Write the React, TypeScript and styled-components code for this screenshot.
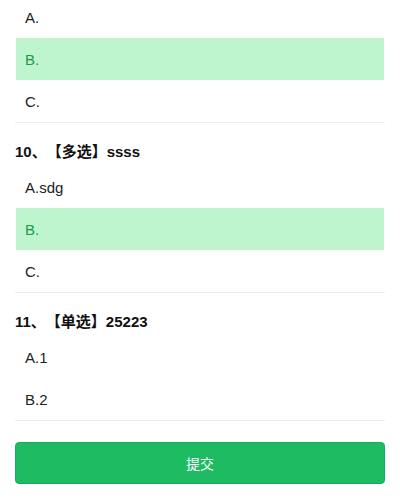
import React from "react";
import styled, { createGlobalStyle } from "styled-components";

const GlobalStyle = createGlobalStyle`
  html, body {
    margin: 0;
    padding: 0;
    background: #ffffff;
    font-family: "Liberation Sans", Arial, "Noto Sans CJK SC", sans-serif;
    overflow: hidden;
  }
`;

const Page = styled.div`
  width: 400px;
  height: 500px;
  overflow: hidden;
`;

const Content = styled.div`
  display: flex;
  flex-direction: column;
  padding: 0 15px 17px;
  margin-top: -4px;
`;

const Question = styled.section`
  display: flex;
  flex-direction: column;
  border-bottom: 1px solid #eeeeee;
`;

const Title = styled.div`
  padding-top: 18px;
  margin-bottom: 3px;
  font-size: 15px;
  line-height: 22px;
  font-weight: bold;
  color: #111111;
  text-spacing-trim: space-all;
`;

const Option = styled.div<{ $selected?: boolean }>`
  height: 42px;
  margin: 0 1px;
  padding-left: 9px;
  display: flex;
  align-items: center;
  font-size: 15px;
  color: ${(p) => (p.$selected ? "#199a52" : "#222222")};
  background: ${(p) => (p.$selected ? "#bef5cf" : "transparent")};
`;

const SubmitButton = styled.button`
  margin-top: 21px;
  height: 42px;
  width: 100%;
  border: 1px solid #17ae5a;
  border-radius: 4px;
  background: #1ebb63;
  color: #ffffff;
  font-size: 14px;
  font-family: "Liberation Sans", Arial, "Noto Sans CJK SC", sans-serif;
  cursor: pointer;
`;

type Q = {
  title?: string;
  options: { label: string; selected?: boolean }[];
};

const questions: Q[] = [
  { options: [{ label: "A." }, { label: "B.", selected: true }, { label: "C." }] },
  {
    title: "10、【多选】ssss",
    options: [{ label: "A.sdg" }, { label: "B.", selected: true }, { label: "C." }],
  },
  { title: "11、【单选】25223", options: [{ label: "A.1" }, { label: "B.2" }] },
];

export default function App() {
  return (
    <Page>
      <GlobalStyle />
      <Content>
        {questions.map((q, i) => (
          <Question key={i}>
            {q.title && <Title>{q.title}</Title>}
            {q.options.map((o) => (
              <Option key={o.label} $selected={o.selected}>
                {o.label}
              </Option>
            ))}
          </Question>
        ))}
        <SubmitButton>提交</SubmitButton>
      </Content>
    </Page>
  );
}
